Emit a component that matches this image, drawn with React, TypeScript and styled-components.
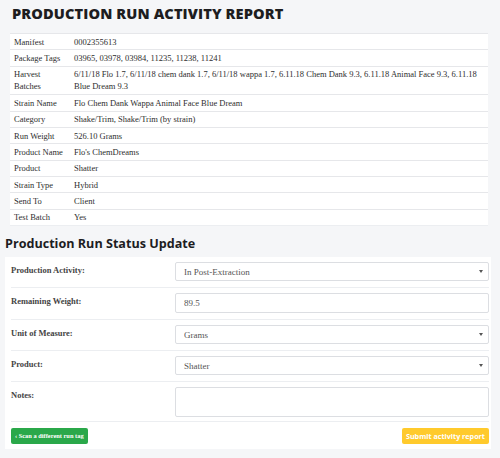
import { createGlobalStyle, styled } from 'styled-components';

const GlobalStyle = createGlobalStyle`
  html, body {
    margin: 0;
    padding: 0;
    background: #f5f6f8;
  }
  body {
    font-family: 'Liberation Serif', serif;
    color: #333;
  }
`;

const Page = styled.div`
  width: 500px;
  height: 458px;
  overflow: hidden;
  padding: 0 9px 0 5px;
  box-sizing: border-box;
`;

const Title = styled.h1`
  margin: 0;
  padding: 3px 0 0 7px;
  height: 30px;
  box-sizing: border-box;
  font-family: 'Open Sans', sans-serif;
  font-weight: 800;
  font-size: 14.6px;
  line-height: 20px;
  letter-spacing: 0.1px;
  color: #1d1d1f;
`;

const DetailsTable = styled.table`
  margin: 3px 0 0 5px;
  width: 478px;
  border-collapse: collapse;
  background: #fff;
  font-size: 8.5px;
  line-height: 12px;
  color: #2e2e2e;
`;

const Row = styled.tr`
  border-top: 1px solid #e6e7ea;
  &:last-child {
    border-bottom: 1px solid #eceef1;
  }
`;

const LabelCell = styled.td`
  width: 60px;
  box-sizing: border-box;
  padding: 1.7px 4px;
  vertical-align: top;
`;

const ValueCell = styled.td`
  padding: 1.7px 4px;
  vertical-align: top;
`;

const SectionHeading = styled.h2`
  margin: 0;
  padding: 9px 0 0 0;
  height: 31px;
  box-sizing: border-box;
  font-family: 'Open Sans', sans-serif;
  font-weight: 700;
  font-size: 12.6px;
  line-height: 18px;
  color: #1d1d1f;
`;

const Panel = styled.div`
  background: #fff;
  width: 486px;
  padding: 0 2px 0 6px;
  box-sizing: border-box;
`;

const FormRow = styled.div<{ $tall?: boolean }>`
  display: grid;
  grid-template-columns: 164px 1fr;
  align-items: start;
  padding: 5px 0 ${(p) => (p.$tall ? '4px' : '6px')};
  border-bottom: 1px solid #eceef1;
`;

const FieldLabel = styled.label`
  font-weight: 700;
  font-size: 8.5px;
  line-height: 12px;
  color: #444;
  padding-top: 2px;
`;

const ControlWrap = styled.div`
  position: relative;
`;

const controlBase = `
  display: block;
  width: 100%;
  box-sizing: border-box;
  border: 1px solid #dcdee2;
  border-radius: 2px;
  background: #fff;
  font-family: 'Liberation Serif', serif;
  font-size: 9px;
  color: #555;
  padding: 0 8px;
  margin: 0;
  outline: none;
`;

const Select = styled.select`
  ${controlBase}
  height: 19px;
  appearance: none;
  -webkit-appearance: none;
`;

const Caret = styled.span`
  position: absolute;
  right: 6px;
  top: 8px;
  width: 0;
  height: 0;
  border-left: 2px solid transparent;
  border-right: 2px solid transparent;
  border-top: 3px solid #555;
  pointer-events: none;
`;

const TextInput = styled.input`
  ${controlBase}
  height: 20px;
`;

const Notes = styled.textarea`
  ${controlBase}
  height: 30px;
  resize: none;
`;

const ButtonBar = styled.div`
  display: flex;
  justify-content: space-between;
  align-items: center;
  padding: 5px 0;
  height: 27px;
  box-sizing: border-box;
`;

const Button = styled.button<{ $variant: 'green' | 'yellow' }>`
  height: 16px;
  border: none;
  border-radius: 2px;
  padding: 0 4px;
  color: #fff;
  cursor: pointer;
  background: ${(p) => (p.$variant === 'green' ? '#2aa84a' : '#ffca2c')};
  font-family: ${(p) =>
    p.$variant === 'green' ? "'Liberation Serif', serif" : "'Open Sans', sans-serif"};
  font-weight: 700;
  font-size: ${(p) => (p.$variant === 'green' ? '6.4px' : '7.2px')};
  white-space: nowrap;
`;

const details: [string, string][] = [
  ['Manifest', '0002355613'],
  ['Package Tags', '03965, 03978, 03984, 11235, 11238, 11241'],
  [
    'Harvest Batches',
    '6/11/18 Flo 1.7, 6/11/18 chem dank 1.7, 6/11/18 wappa 1.7, 6.11.18 Chem Dank 9.3, 6.11.18 Animal Face 9.3, 6.11.18 Blue Dream 9.3',
  ],
  ['Strain Name', 'Flo Chem Dank Wappa Animal Face Blue Dream'],
  ['Category', 'Shake/Trim, Shake/Trim (by strain)'],
  ['Run Weight', '526.10 Grams'],
  ['Product Name', "Flo's ChemDreams"],
  ['Product', 'Shatter'],
  ['Strain Type', 'Hybrid'],
  ['Send To', 'Client'],
  ['Test Batch', 'Yes'],
];

export default function App() {
  return (
    <Page>
      <GlobalStyle />
      <Title>PRODUCTION RUN ACTIVITY REPORT</Title>
      <DetailsTable>
        <tbody>
          {details.map(([label, value]) => (
            <Row key={label}>
              <LabelCell>{label}</LabelCell>
              <ValueCell>{value}</ValueCell>
            </Row>
          ))}
        </tbody>
      </DetailsTable>

      <SectionHeading>Production Run Status Update</SectionHeading>
      <Panel>
        <FormRow>
          <FieldLabel>Production Activity:</FieldLabel>
          <ControlWrap>
            <Select defaultValue="post">
              <option value="post">In Post-Extraction</option>
            </Select>
            <Caret />
          </ControlWrap>
        </FormRow>
        <FormRow>
          <FieldLabel>Remaining Weight:</FieldLabel>
          <ControlWrap>
            <TextInput defaultValue="89.5" />
          </ControlWrap>
        </FormRow>
        <FormRow>
          <FieldLabel>Unit of Measure:</FieldLabel>
          <ControlWrap>
            <Select defaultValue="grams">
              <option value="grams">Grams</option>
            </Select>
            <Caret />
          </ControlWrap>
        </FormRow>
        <FormRow>
          <FieldLabel>Product:</FieldLabel>
          <ControlWrap>
            <Select defaultValue="shatter">
              <option value="shatter">Shatter</option>
            </Select>
            <Caret />
          </ControlWrap>
        </FormRow>
        <FormRow $tall>
          <FieldLabel>Notes:</FieldLabel>
          <ControlWrap>
            <Notes />
          </ControlWrap>
        </FormRow>
        <ButtonBar>
          <Button $variant="green">‹ Scan a different run tag</Button>
          <Button $variant="yellow">Submit activity report</Button>
        </ButtonBar>
      </Panel>
    </Page>
  );
}
